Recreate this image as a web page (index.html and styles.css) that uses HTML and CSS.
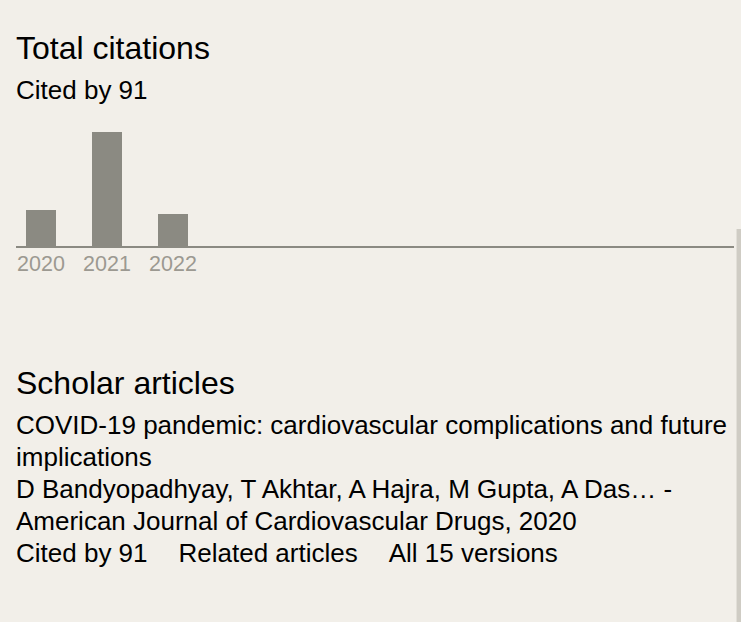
FILE: index.html
```html
<!DOCTYPE html>
<html lang="en">

<head>
  <meta charset="UTF-8" />
  <title>Citations</title>
  <link rel="stylesheet" href="styles.css">
</head>

<body>
  <div class="panel">
    <h2 class="section-title">Total citations</h2>
    <div class="cited">Cited by 91</div>

    <div class="chart">
      <div class="chart-bars">
        <div class="bar" style="height: 36px"></div>
        <div class="bar" style="height: 114px"></div>
        <div class="bar" style="height: 32px"></div>
      </div>
      <div class="chart-labels">
        <span class="year">2020</span>
        <span class="year">2021</span>
        <span class="year">2022</span>
      </div>
    </div>

    <h2 class="section-title scholar">Scholar articles</h2>
    <div class="article">
      <a class="article-title" href="#">COVID-19 pandemic: cardiovascular complications and future implications</a>
      <div class="authors">D Bandyopadhyay, T Akhtar, A Hajra, M Gupta, A Das… -</div>
      <div class="source">American Journal of Cardiovascular Drugs, 2020</div>
      <div class="links">
        <a href="#">Cited by 91</a>
        <a href="#">Related articles</a>
        <a href="#">All 15 versions</a>
      </div>
    </div>
  </div>
  <div class="scroll-edge"></div>
</body>

</html>
```

FILE: styles.css
```css
html,
body {
  margin: 0;
  height: 100%;
}

body {
  font-family: "Liberation Sans", Arial, sans-serif;
  background-color: #f2efe9;
  color: #000;
  position: relative;
  overflow: hidden;
}

.panel {
  padding: 0 6px 0 16px;
}

.section-title {
  font-size: 32px;
  font-weight: normal;
  line-height: 36px;
  margin: 30px 0 0;
}

.cited {
  font-size: 26px;
  line-height: 32px;
  margin-top: 8px;
}

.chart {
  margin-top: 10px;
  margin-right: 1px;
}

.chart-bars {
  display: flex;
  align-items: flex-end;
  gap: 36px;
  height: 130px;
  padding-left: 10px;
  border-bottom: 2px solid #8b8a82;
}

.bar {
  width: 30px;
  background: #8b8a82;
}

.chart-labels {
  display: flex;
  gap: 36px;
  padding-left: 10px;
}

.year {
  width: 30px;
  display: flex;
  justify-content: center;
  white-space: nowrap;
  font-size: 21.5px;
  line-height: 32px;
  color: #9c9991;
}

.scholar {
  margin-top: 85px;
}

.article {
  margin-top: 8px;
  font-size: 26px;
  line-height: 32px;
}

.article a {
  color: #000;
  text-decoration: none;
}

.links {
  display: flex;
  gap: 31px;
}

.scroll-edge {
  position: absolute;
  right: 0;
  top: 229px;
  bottom: 0;
  width: 4px;
  background: #cfccc4;
  border-left: 1px solid #e2dfd8;
}
```
